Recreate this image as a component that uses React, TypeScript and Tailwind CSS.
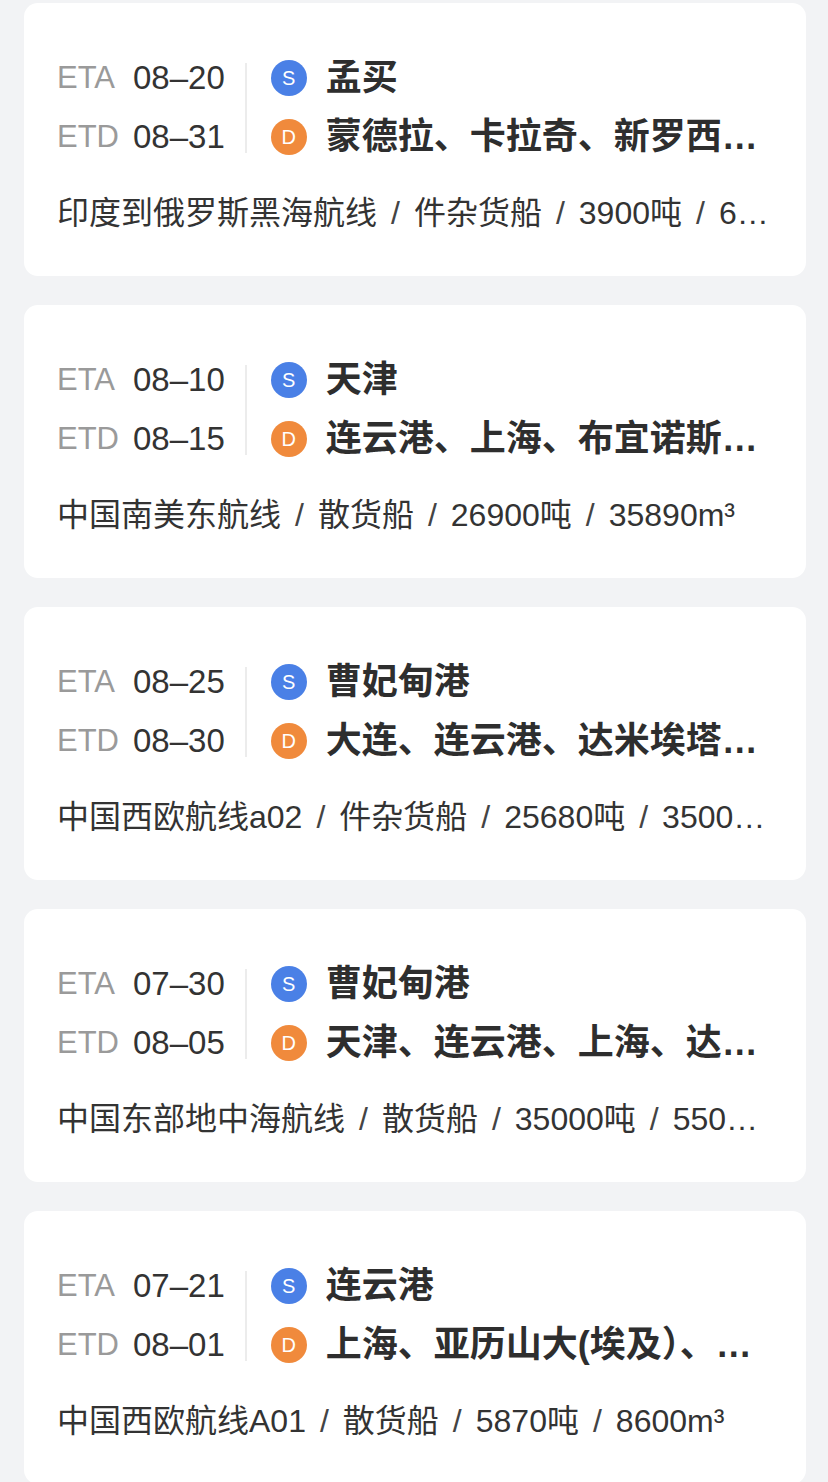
import React from "react";

type Item = {
  eta: string;
  etd: string;
  s: string;
  d: string;
  desc: string[];
};

const items: Item[] = [
  {
    eta: "08–20",
    etd: "08–31",
    s: "孟买",
    d: "蒙德拉、卡拉奇、新罗西斯克",
    desc: ["印度到俄罗斯黑海航线", "件杂货船", "3900吨", "6500m³"],
  },
  {
    eta: "08–10",
    etd: "08–15",
    s: "天津",
    d: "连云港、上海、布宜诺斯艾利斯",
    desc: ["中国南美东航线", "散货船", "26900吨", "35890m³"],
  },
  {
    eta: "08–25",
    etd: "08–30",
    s: "曹妃甸港",
    d: "大连、连云港、达米埃塔、亚历山大",
    desc: ["中国西欧航线a02", "件杂货船", "25680吨", "35000m³"],
  },
  {
    eta: "07–30",
    etd: "08–05",
    s: "曹妃甸港",
    d: "天津、连云港、上海、达米埃塔",
    desc: ["中国东部地中海航线", "散货船", "35000吨", "55000m³"],
  },
  {
    eta: "07–21",
    etd: "08–01",
    s: "连云港",
    d: "上海、亚历山大(埃及）、达米埃塔",
    desc: ["中国西欧航线A01", "散货船", "5870吨", "8600m³"],
  },
];

const FONT = { fontFamily: '"Liberation Sans", "Noto Sans CJK SC", sans-serif' };

function Badge({ letter, color }: { letter: string; color: string }) {
  return (
    <div
      className={`w-[36px] h-[36px] rounded-full flex items-center justify-center text-white text-[20px] shrink-0 ${color}`}
    >
      {letter}
    </div>
  );
}

function Card({ item }: { item: Item }) {
  return (
    <div className="bg-white rounded-[14px] pt-[53px] pb-[43px] pl-[33px] pr-[33px]">
      <div className="flex items-center">
        <div className="flex flex-col gap-[15px] shrink-0">
          <div className="h-[44px] flex items-center">
            <span className="text-[31px] text-[#9a9a9a] w-[76px]">ETA</span>
            <span className="text-[33px] text-[#333333]">{item.eta}</span>
          </div>
          <div className="h-[44px] flex items-center">
            <span className="text-[31px] text-[#9a9a9a] w-[76px]">ETD</span>
            <span className="text-[33px] text-[#333333]">{item.etd}</span>
          </div>
        </div>
        <div className="w-[2px] h-[90px] bg-[#ececec] ml-[20px] mr-[24px] shrink-0" />
        <div className="flex flex-col gap-[15px] min-w-0 flex-1">
          <div className="h-[44px] flex items-center gap-[19px] min-w-0">
            <Badge letter="S" color="bg-[#4a80e6]" />
            <span className="text-[36px] leading-[44px] font-bold text-[#2e2e2e] whitespace-nowrap overflow-hidden text-ellipsis min-w-0">
              {item.s}
            </span>
          </div>
          <div className="h-[44px] flex items-center gap-[19px] min-w-0">
            <Badge letter="D" color="bg-[#f08a3c]" />
            <span className="text-[36px] leading-[44px] font-bold text-[#2e2e2e] whitespace-nowrap overflow-hidden text-ellipsis min-w-0">
              {item.d}
            </span>
          </div>
        </div>
      </div>
      <div className="mt-[34px] h-[40px] leading-[40px] text-[32px] text-[#333333] whitespace-nowrap overflow-hidden text-ellipsis">
        {item.desc.map((p, i) => (
          <React.Fragment key={i}>
            {i > 0 && <span className="mx-[14px] text-[#444444]">/</span>}
            {p}
          </React.Fragment>
        ))}
      </div>
    </div>
  );
}

export default function App() {
  return (
    <div className="min-h-[1482px] bg-[#f2f3f5] pt-[3px] pl-[24px] pr-[22px]" style={FONT}>
      <div className="flex flex-col gap-[29px]">
        {items.map((it, i) => (
          <Card key={i} item={it} />
        ))}
      </div>
    </div>
  );
}
